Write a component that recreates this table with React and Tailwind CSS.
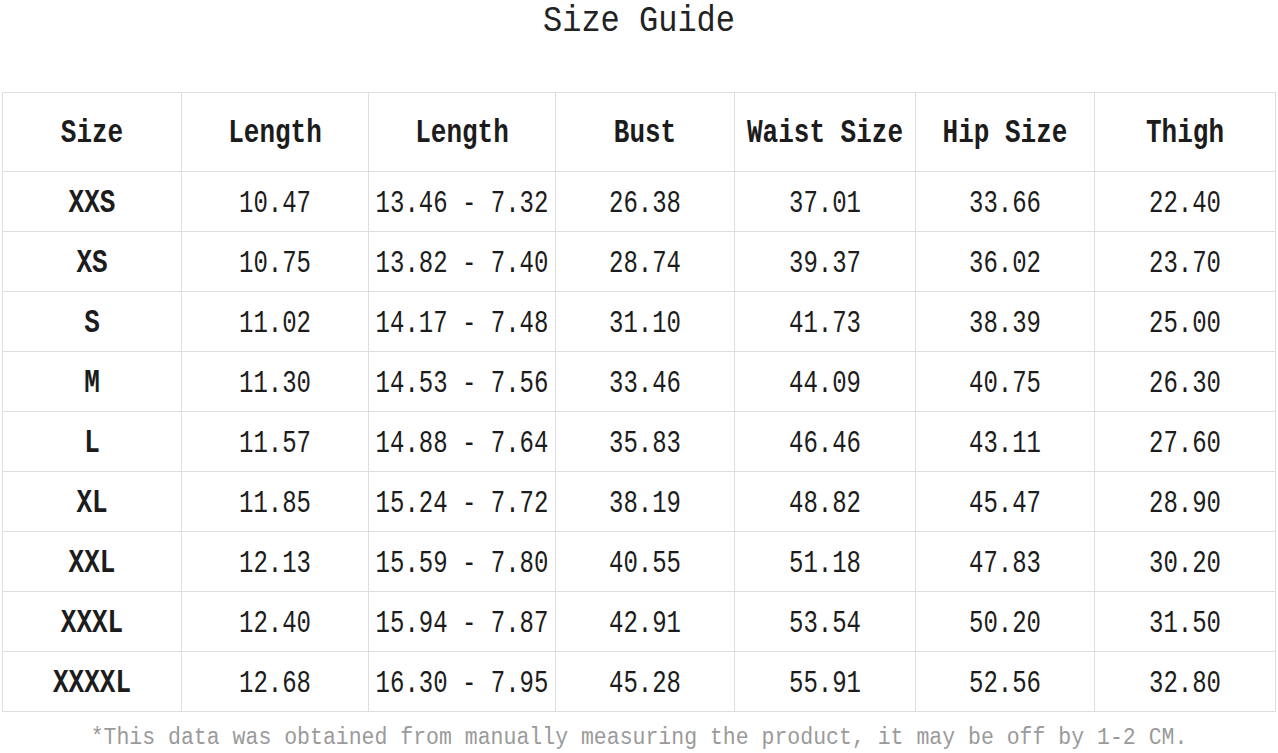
import React from "react";

const headers = ["Size", "Length", "Length", "Bust", "Waist Size", "Hip Size", "Thigh"];
const widths = ["w-[179px]", "w-[187px]", "w-[187px]", "w-[179px]", "w-[181px]", "w-[179px]", "w-[181px]"];

const rows = [
  ["XXS", "10.47", "13.46 - 7.32", "26.38", "37.01", "33.66", "22.40"],
  ["XS", "10.75", "13.82 - 7.40", "28.74", "39.37", "36.02", "23.70"],
  ["S", "11.02", "14.17 - 7.48", "31.10", "41.73", "38.39", "25.00"],
  ["M", "11.30", "14.53 - 7.56", "33.46", "44.09", "40.75", "26.30"],
  ["L", "11.57", "14.88 - 7.64", "35.83", "46.46", "43.11", "27.60"],
  ["XL", "11.85", "15.24 - 7.72", "38.19", "48.82", "45.47", "28.90"],
  ["XXL", "12.13", "15.59 - 7.80", "40.55", "51.18", "47.83", "30.20"],
  ["XXXL", "12.40", "15.94 - 7.87", "42.91", "53.54", "50.20", "31.50"],
  ["XXXXL", "12.68", "16.30 - 7.95", "45.28", "55.91", "52.56", "32.80"],
];

// texto estreito e alto, tipo SimSun
function Tall({ children, className = "scale-y-[1.3]" }) {
  return <span className={`inline-block ${className}`}>{children}</span>;
}

export default function App() {
  return (
    <div className="w-[1278px] h-[753px] bg-white text-[#1c1c1c] font-['Liberation_Mono',monospace] overflow-hidden">
      {/* Título */}
      <div className="h-[37px] text-center text-[32px] text-[#222]">
        <span className="block leading-[37px] origin-top scale-y-[1.15]">Size Guide</span>
      </div>

      {/* Tabela */}
      <table className="mt-[55px] ml-[2px] w-[1273px] border-collapse table-fixed">
        <thead>
          <tr className="h-[79px]">
            {headers.map((h, i) => (
              <th
                key={i}
                className={`${widths[i]} border border-[#dedede] text-center font-bold text-[26px] whitespace-nowrap`}
              >
                <Tall className="scale-y-[1.3] translate-y-[1px]">{h}</Tall>
              </th>
            ))}
          </tr>
        </thead>
        <tbody>
          {rows.map((r, ri) => (
            <tr key={ri} className="h-[60px]">
              {r.map((c, ci) => (
                <td
                  key={ci}
                  className={`border border-[#dedede] text-center whitespace-nowrap ${
                    ci === 0 ? "font-bold text-[26px]" : "text-[24px]"
                  }`}
                >
                  <Tall className="scale-y-[1.3] translate-y-[2px]">{c}</Tall>
                </td>
              ))}
            </tr>
          ))}
        </tbody>
      </table>

      {/* Nota */}
      <div className="pt-[12px] leading-[26px] text-center text-[21.5px] text-[#9a9a9a] whitespace-nowrap">
        <Tall className="scale-y-[1.15]">
          *This data was obtained from manually measuring the product, it may be off by 1-2 CM.
        </Tall>
      </div>
    </div>
  );
}
